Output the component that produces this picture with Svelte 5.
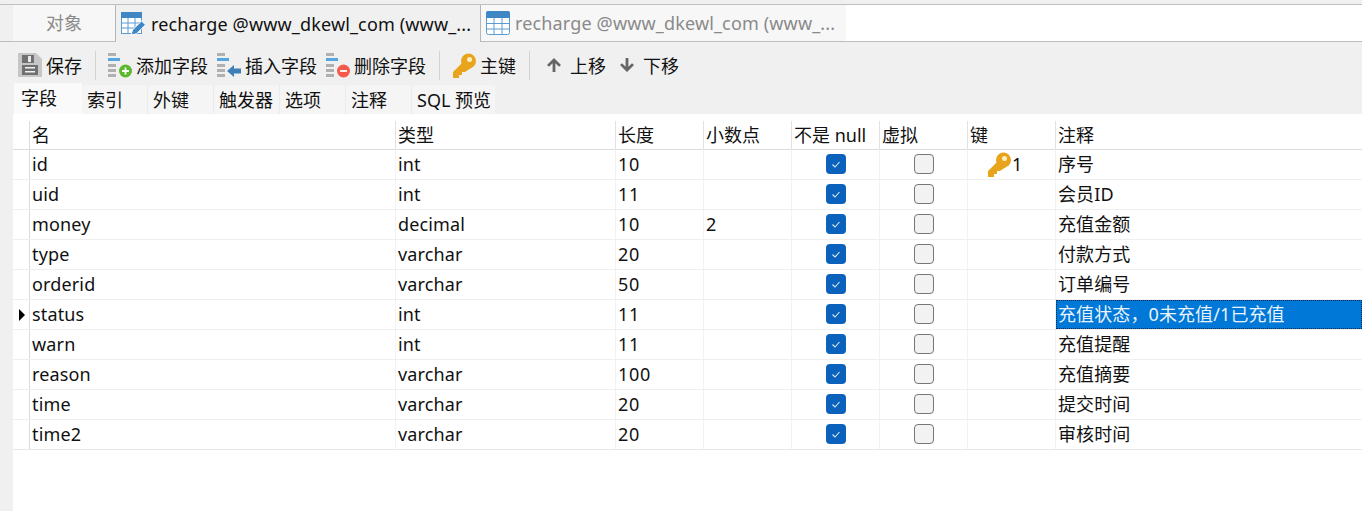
<script>
  const rows = [
    { name: 'id', type: 'int', len: '10', dec: '', key: true, note: '序号' },
    { name: 'uid', type: 'int', len: '11', dec: '', note: '会员ID' },
    { name: 'money', type: 'decimal', len: '10', dec: '2', note: '充值金额' },
    { name: 'type', type: 'varchar', len: '20', dec: '', note: '付款方式' },
    { name: 'orderid', type: 'varchar', len: '50', dec: '', note: '订单编号' },
    { name: 'status', type: 'int', len: '11', dec: '', note: '充值状态，0未充值/1已充值', current: true },
    { name: 'warn', type: 'int', len: '11', dec: '', note: '充值提醒' },
    { name: 'reason', type: 'varchar', len: '100', dec: '', note: '充值摘要' },
    { name: 'time', type: 'varchar', len: '20', dec: '', note: '提交时间' },
    { name: 'time2', type: 'varchar', len: '20', dec: '', note: '审核时间' }
  ];
  const heads = ['名', '类型', '长度', '小数点', '不是 null', '虚拟', '键', '注释'];
  const subtabs = ['字段', '索引', '外键', '触发器', '选项', '注释', 'SQL 预览'];
</script>

{#snippet keyIcon()}
  <svg width="23" height="25" viewBox="0 0 23 25" aria-hidden="true">
    <path d="M10 9L0 19v6h6v-3h3v-3h3l6-4z" fill="#e8a51c" />
    <circle cx="15.500" cy="8" r="7.500" fill="#e8a51c" />
    <circle cx="16.500" cy="6.500" r="2.500" fill="#fdeec4" />
  </svg>
{/snippet}

{#snippet fieldIcon()}
  <rect x="0" y="0" width="8" height="3" fill="#b0b0b0" />
  <rect x="0" y="5" width="12" height="3" fill="#55a5e0" />
  <rect x="0" y="11" width="8" height="3" fill="#b0b0b0" />
  <rect x="0" y="16" width="8" height="3" fill="#b0b0b0" />
  <rect x="0" y="21" width="8" height="3" fill="#b0b0b0" />
{/snippet}

<div class="app">
  <div class="tabs">
    <div class="tab objects">对象</div>
    <div class="tab active">
      <svg width="25" height="24" viewBox="0 0 25 24" aria-hidden="true">
        <rect x="0.500" y="0.500" width="20" height="21" fill="#fff" stroke="#5b9bd0" />
        <rect x="0" y="0" width="21" height="6" fill="#3f87c4" />
        <path d="M7 6v16M14 6v14M0 11h21M0 16h16" stroke="#5b9bd0" fill="none" />
        <path d="M10 23l1.500-5 9-9 4 3.800-9 9z" fill="#3f87c4" stroke="#fff" />
      </svg>
      <span>recharge @www_dkewl_com (www_...</span>
    </div>
    <div class="tab inactive">
      <svg width="24" height="24" viewBox="0 0 24 24" aria-hidden="true">
        <rect x="0.500" y="0.500" width="23" height="23" rx="2" fill="#fff" stroke="#5b9bd0" />
        <path d="M0 2a2 2 0 0 1 2-2h20a2 2 0 0 1 2 2v5H0z" fill="#3f87c4" />
        <path d="M8 7v17M16 7v17M0 12.500h24M0 18h24" stroke="#5b9bd0" fill="none" />
      </svg>
      <span>recharge @www_dkewl_com (www_...</span>
    </div>
    <div class="tab-fill"></div>
  </div>

  <div class="toolbar">
    <button class="tool">
      <svg width="24" height="24" viewBox="0 0 24 24" aria-hidden="true">
        <path d="M0 0h18l6 6v18H0z" fill="#c6c6c6" />
        <rect x="4" y="2" width="12" height="8" fill="#707070" />
        <rect x="10" y="3" width="3" height="6" fill="#e8e8e8" />
        <rect x="4" y="12" width="16" height="10" fill="#707070" />
        <rect x="7" y="14" width="10" height="1.500" fill="#f2f2f2" />
        <rect x="7" y="18" width="10" height="1.500" fill="#f2f2f2" />
      </svg>
      <span>保存</span>
    </button>
    <i class="sep first"></i>
    <button class="tool field">
      <svg width="25" height="25" viewBox="0 0 25 25" aria-hidden="true">
        {@render fieldIcon()}
        <circle cx="17.500" cy="18" r="6.500" fill="#5cb82c" />
        <path d="M17.500 14.500v7M14 18h7" stroke="#fff" stroke-width="1.800" />
      </svg>
      <span>添加字段</span>
    </button>
    <button class="tool field">
      <svg width="25" height="25" viewBox="0 0 25 25" aria-hidden="true">
        {@render fieldIcon()}
        <path d="M10 18l7-6v3.500h7v5h-7v3.500z" fill="#3f7fb8" />
      </svg>
      <span>插入字段</span>
    </button>
    <button class="tool field">
      <svg width="25" height="25" viewBox="0 0 25 25" aria-hidden="true">
        {@render fieldIcon()}
        <circle cx="17.500" cy="18" r="6.500" fill="#f55a4b" />
        <path d="M14 18h7" stroke="#fff" stroke-width="1.800" />
      </svg>
      <span>删除字段</span>
    </button>
    <i class="sep second"></i>
    <button class="tool">
      {@render keyIcon()}
      <span>主键</span>
    </button>
    <i class="sep third"></i>
    <button class="tool move">
      <svg width="16" height="16" viewBox="0 0 16 16" aria-hidden="true">
        <path d="M8 1l7 7-2 1.800-3.600-3.500V15H6.600V6.300L3 9.800 1 8z" fill="#666" />
      </svg>
      <span>上移</span>
    </button>
    <button class="tool move">
      <svg width="16" height="16" viewBox="0 0 16 16" aria-hidden="true">
        <path d="M8 15L1 8l2-1.800 3.600 3.500V1h2.800v8.700L13 6.200 15 8z" fill="#666" />
      </svg>
      <span>下移</span>
    </button>
  </div>

  <div class="subtabs">
    {#each subtabs as t, i}
      <div class="subtab" class:on={i === 0} class:sql={i === 6}>{t}</div>
    {/each}
  </div>

  <div class="panel">
    <div class="row head">
      <div class="cell mark"></div>
      {#each heads as h}
        <div class="cell">{h}</div>
      {/each}
    </div>
    {#each rows as r}
      <div class="row body">
        <div class="cell mark">{#if r.current}<span class="arrow"></span>{/if}</div>
        <div class="cell word">{r.name}</div>
        <div class="cell word">{r.type}</div>
        <div class="cell num">{r.len}</div>
        <div class="cell num">{r.dec}</div>
        <div class="cell center"><span class="check on">
          <svg width="12" height="12" viewBox="0 0 12 12" aria-hidden="true"><path d="M2.500 6.500l2.500 2.500 4.500-5" fill="none" stroke="#dce9f7" stroke-width="1.100" /></svg>
        </span></div>
        <div class="cell center"><span class="check"></span></div>
        <div class="cell keycell">{#if r.key}{@render keyIcon()}<span>1</span>{/if}</div>
        <div class="cell note" class:selected={r.current}><span>{r.note}</span></div>
      </div>
    {/each}
  </div>
</div>

<style>
  :global(body) {
    margin: 0;
    background: #f0f0f0;
  }
  .app {
    width: 1362px;
    height: 511px;
    overflow: hidden;
    box-sizing: border-box;
    padding-top: 4px;
    font-family: "Noto Sans", "Noto Sans CJK SC", sans-serif;
    font-size: 18px;
    color: #111;
    background: #f0f0f0;
    display: flex;
    flex-direction: column;
  }
  .tabs {
    display: flex;
    height: 38px;
    box-sizing: border-box;
    border-top: 1px solid #c0c0c0;
    border-bottom: 1px solid #bdbdbd;
    padding-left: 13px;
  }
  .tab {
    display: flex;
    align-items: center;
    box-sizing: border-box;
    height: 37px;
    line-height: 36px;
    white-space: nowrap;
  }
  .objects {
    width: 103px;
    justify-content: center;
    background: #f7f7f7;
    color: #8a8a8a;
    border-right: 1px solid #b5b5b5;
    height: 36px;
  }
  .active {
    width: 365px;
    gap: 5px;
    padding-left: 5px;
    background: #f0f0f0;
    border-right: 1px solid #b5b5b5;
  }
  .inactive {
    width: 365px;
    height: 36px;
    gap: 5px;
    padding-left: 5px;
    background: #f7f7f7;
    color: #8a8a8a;
  }
  .tab span {
    letter-spacing: 0.15px;
  }
  .tab-fill {
    flex: 1;
    background: #fff;
    height: 36px;
  }
  .toolbar {
    display: flex;
    align-items: center;
    height: 42px;
    padding: 4px 0 0 18px;
    box-sizing: border-box;
  }
  .tool {
    all: unset;
    display: flex;
    align-items: center;
    gap: 4px;
    color: #111;
    white-space: nowrap;
  }
  .tool + .tool {
    margin-left: 9px;
  }
  .field {
    gap: 3px;
  }
  .sep {
    width: 1px;
    height: 29px;
    background: #d2d2d2;
  }
  .sep.first {
    margin: 0 12px 0 13px;
  }
  .sep.second {
    margin: 0 13px;
  }
  .sep.third {
    margin: 0 16px 0 13px;
  }
  .move {
    gap: 8px;
  }
  .tool.move + .tool.move {
    margin-left: 13px;
  }
  .subtabs {
    display: flex;
    height: 30px;
    padding-left: 14px;
  }
  .subtab {
    width: 66px;
    box-sizing: border-box;
    height: 29px;
    margin-top: 1px;
    padding-left: 5px;
    background: #f5f5f5;
    line-height: 30px;
    border-right: 1px solid #ebebeb;
    white-space: nowrap;
  }
  .subtab.on {
    height: 31px;
    margin-top: -1px;
    padding-left: 7px;
    background: #fafafa;
    line-height: 31px;
    border-right: none;
    width: 68px;
  }
  .subtab.sql {
    width: 83px;
    border-right: none;
  }
  .panel {
    flex: 1;
    margin-left: 13px;
    background: #fff;
    padding-top: 7px;
    box-sizing: border-box;
  }
  .row {
    display: grid;
    grid-template-columns: 17px 366px 220px 88px 88px 88px 88px 88px 1fr;
  }
  .head {
    height: 29px;
    border-bottom: 1px solid #dcdcdc;
    box-sizing: border-box;
  }
  .head .cell {
    border-right: 1px solid #e2e2e2;
    line-height: 29px;
  }
  .head .cell:last-child {
    border-right: none;
  }
  .body {
    height: 30px;
    box-sizing: border-box;
    border-bottom: 1px solid #efefef;
  }
  .body:last-child {
    border-bottom-color: #e8e8e8;
  }
  .cell {
    box-sizing: border-box;
    padding-left: 2px;
    white-space: nowrap;
    line-height: 29px;
    border-right: 1px solid #f2f2f2;
    min-width: 0;
  }
  .word {
    letter-spacing: 0.15px;
  }
  .num {
    letter-spacing: 0.7px;
  }
  .mark {
    padding: 0;
    display: flex;
    align-items: center;
    justify-content: flex-end;
    padding-right: 4px;
    border-right: 1px solid #dcdcdc !important;
  }
  .head .mark {
    padding: 0;
  }
  .arrow {
    width: 0;
    height: 0;
    border-left: 6px solid #000;
    border-top: 6px solid transparent;
    border-bottom: 6px solid transparent;
  }
  .center {
    display: flex;
    align-items: flex-start;
    justify-content: center;
    padding: 4px 0 0;
  }
  .check {
    width: 20px;
    height: 20px;
    box-sizing: border-box;
    border: 1.500px solid #767676;
    border-radius: 4px;
    background: #f2f2f2;
    display: flex;
    align-items: center;
    justify-content: center;
  }
  .check.on {
    background: #0b62bd;
    border: none;
  }
  .keycell {
    display: flex;
    align-items: center;
    padding-left: 20px;
    gap: 1px;
  }
  .keycell span {
    line-height: 29px;
  }
  .note {
    border-right: none;
    letter-spacing: 0.1px;
  }
  .note.selected {
    background: #0078d7;
    color: #e8f2fb;
    outline: 1px dotted #0a2a50;
    outline-offset: -1px;
  }
</style>
